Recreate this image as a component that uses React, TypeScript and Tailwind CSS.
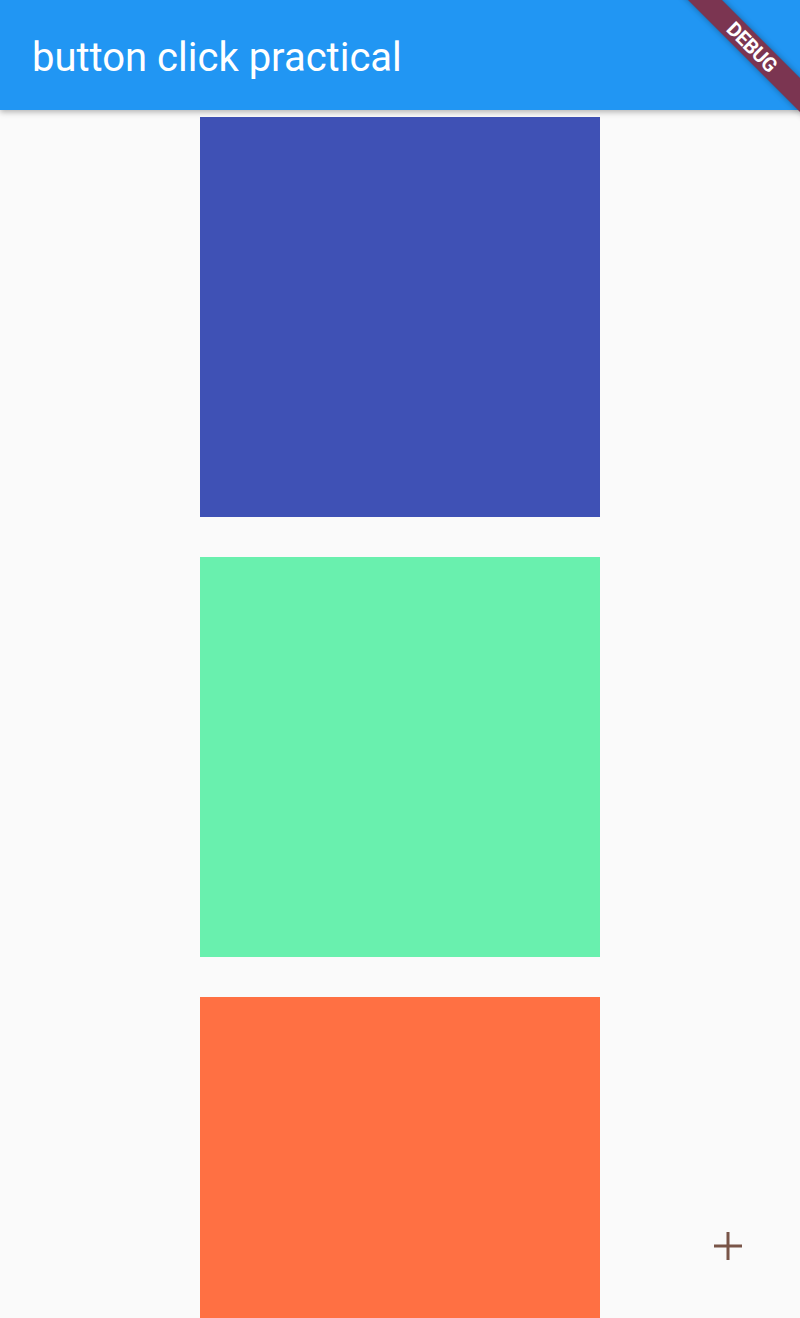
import React from "react"

const boxes = ["bg-[#3f51b5]", "bg-[#69f0ae]", "bg-[#ff7043]"]

const App = () => {
  return (
    <div className="relative w-[800px] h-[1318px] overflow-hidden bg-[#fafafa] font-['Roboto',sans-serif]">
      <header className="relative z-10 h-[110px] bg-[#2196f3] flex items-center px-8 shadow-[0_2px_6px_rgba(0,0,0,0.3)]">
        <h1 className="text-[40px] leading-none text-white font-normal pt-[6px]">
          button click practical
        </h1>
      </header>

      <main className="flex flex-col items-center gap-10 pt-[7px]">
        {boxes.map((c) => (
          <div key={c} className={`w-[400px] h-[400px] shrink-0 ${c}`} />
        ))}
      </main>

      {/* floating add button (flat) */}
      <button className="absolute left-[708px] top-[1226px] w-10 h-10 flex items-center justify-center">
        <svg width="28" height="28" viewBox="0 0 28 28">
          <path d="M14 0v28M0 14h28" stroke="#795548" strokeWidth="3" />
        </svg>
      </button>

      {/* debug banner */}
      <div className="absolute z-20 left-[652px] top-[35px] w-[200px] h-6 rotate-45 bg-[#7b3551] shadow-[0_0_6px_rgba(0,0,0,0.35)] flex items-center justify-center">
        <span className="text-white text-[20px] font-bold tracking-tight leading-none">
          DEBUG
        </span>
      </div>
    </div>
  )
}

export default App
